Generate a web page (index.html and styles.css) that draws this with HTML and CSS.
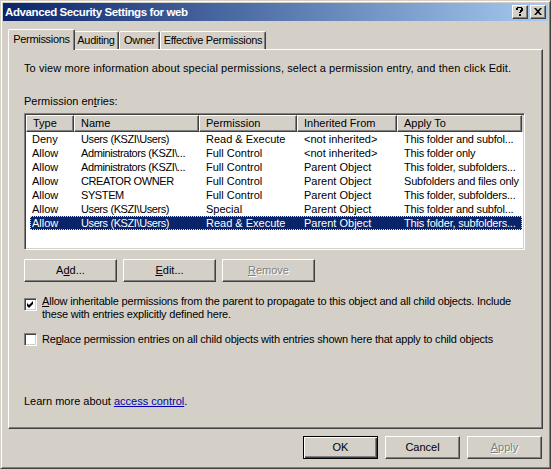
FILE: index.html
```html
<!DOCTYPE html>
<html>
<head>
<meta charset="utf-8">
<title>Advanced Security Settings for web</title>
<link rel="stylesheet" href="styles.css">
</head>
<body>
<div class="window">
  <div class="titlebar">
    <span class="title">Advanced Security Settings for web</span>
    <div class="tbtns">
      <span class="tbtn">
        <svg width="8" height="9" viewBox="0 0 8 9"><path d="M1 0h5v1H1zM0 1h2v2H0zM5 1h2v3H5zM4 3h2v2H4zM3 5h2v1H3zM3 7h2v2H3z" fill="#000"/></svg>
      </span>
      <span class="tbtn">
        <svg width="8" height="7" viewBox="0 0 8 7"><path d="M0 0h2l2 2.2L6 0h2L5 3.5 8 7H6L4 4.8 2 7H0l3-3.5z" fill="#000"/></svg>
      </span>
    </div>
  </div>
  <div class="client">
    <div class="tabs">
      <div class="tab tab-active">Permissions</div>
      <div class="tab tab-auditing">Auditing</div>
      <div class="tab tab-owner">Owner</div>
      <div class="tab tab-effective">Effective Permissions</div>
    </div>
    <div class="panel">
      <p class="intro">To view more information about special permissions, select a permission entry, and then click Edit.</p>
      <div class="label">Permission en<u>t</u>ries:</div>
      <div class="list">
        <div class="header">
          <div class="hcell c1">Type</div>
          <div class="hcell c2">Name</div>
          <div class="hcell c3">Permission</div>
          <div class="hcell c4">Inherited From</div>
          <div class="hcell c5">Apply To</div>
        </div>
        <div class="row">
          <div class="cell c1">Deny</div><div class="cell c2">Users (KSZI\Users)</div><div class="cell c3">Read &amp; Execute</div><div class="cell c4">&lt;not inherited&gt;</div><div class="cell c5">This folder and subfol...</div>
        </div>
        <div class="row">
          <div class="cell c1">Allow</div><div class="cell c2">Administrators (KSZI\...</div><div class="cell c3">Full Control</div><div class="cell c4">&lt;not inherited&gt;</div><div class="cell c5">This folder only</div>
        </div>
        <div class="row">
          <div class="cell c1">Allow</div><div class="cell c2">Administrators (KSZI\...</div><div class="cell c3">Full Control</div><div class="cell c4">Parent Object</div><div class="cell c5">This folder, subfolders...</div>
        </div>
        <div class="row">
          <div class="cell c1">Allow</div><div class="cell c2">CREATOR OWNER</div><div class="cell c3">Full Control</div><div class="cell c4">Parent Object</div><div class="cell c5">Subfolders and files only</div>
        </div>
        <div class="row">
          <div class="cell c1">Allow</div><div class="cell c2">SYSTEM</div><div class="cell c3">Full Control</div><div class="cell c4">Parent Object</div><div class="cell c5">This folder, subfolders...</div>
        </div>
        <div class="row">
          <div class="cell c1">Allow</div><div class="cell c2">Users (KSZI\Users)</div><div class="cell c3">Special</div><div class="cell c4">Parent Object</div><div class="cell c5">This folder and subfol...</div>
        </div>
        <div class="row row-selected">
          <div class="cell c1">Allow</div><div class="cell c2">Users (KSZI\Users)</div><div class="cell c3">Read &amp; Execute</div><div class="cell c4">Parent Object</div><div class="cell c5">This folder, subfolders...</div>
        </div>
      </div>
      <div class="btnrow">
        <button class="btn btn-wide">A<u>d</u>d...</button>
        <button class="btn btn-wide"><u>E</u>dit...</button>
        <button class="btn btn-wide btn-disabled"><u>R</u>emove</button>
      </div>
      <div class="check check-first">
        <span class="box">
          <svg width="9" height="9" viewBox="0 0 9 9"><path d="M1 3l2 2 4-4v3L3 8 1 6z" fill="#000"/></svg>
        </span>
        <span class="ctext"><u>A</u>llow inheritable permissions from the parent to propagate to this object and all child objects. Include<br>these with entries explicitly defined here.</span>
      </div>
      <div class="check check-second">
        <span class="box"></span>
        <span class="ctext">Re<u>p</u>lace permission entries on all child objects with entries shown here that apply to child objects</span>
      </div>
      <div class="spacer"></div>
      <div class="learn">Learn more about <a class="link" href="#">access control</a>.</div>
    </div>
    <div class="footer">
      <button class="btn btn-default">OK</button>
      <button class="btn">Cancel</button>
      <button class="btn btn-disabled"><u>A</u>pply</button>
    </div>
  </div>
</div>
</body>
</html>
```
FILE: styles.css
```css
* { box-sizing: border-box; }
html, body { margin: 0; padding: 0; background: #d4d0c8; }
body {
  font-family: "Liberation Sans", Arial, sans-serif;
  font-size: 11px;
  line-height: 13px;
  color: #000;
}
.window {
  width: 551px;
  height: 469px;
  border: 1px solid;
  border-color: #d4d0c8 #404040 #404040 #d4d0c8;
  box-shadow: inset 1px 1px #fff, inset -1px -1px #808080;
  padding: 2px;
  display: flex;
  flex-direction: column;
  background: #d4d0c8;
}
.titlebar {
  height: 18px;
  flex: none;
  background: linear-gradient(to right, #0a246a, #a6caf0);
  display: flex;
  align-items: center;
  justify-content: space-between;
  padding: 0 2px 0 2px;
}
.title {
  color: #fff;
  font-weight: bold;
  font-size: 11.5px;
  letter-spacing: -0.4px;
  white-space: nowrap;
}
.tbtns { display: flex; gap: 2px; }
.tbtn {
  width: 16px;
  height: 14px;
  background: #d4d0c8;
  border: 1px solid;
  border-color: #fff #404040 #404040 #fff;
  box-shadow: inset -1px -1px #808080;
  display: flex;
  align-items: center;
  justify-content: center;
  padding-bottom: 1px;
}
.client {
  flex: 1;
  display: flex;
  flex-direction: column;
  padding: 8px 5px 0 5px;
}
.tabs {
  display: flex;
  align-items: flex-end;
  height: 20px;
  padding-left: 2px;
  position: relative;
  z-index: 1;
}
.tab {
  height: 18px;
  padding: 0;
  line-height: 16px;
  text-align: center;
  border: 1px solid;
  border-bottom: none;
  border-color: #fff #404040 transparent #fff;
  border-radius: 2px 2px 0 0;
  box-shadow: inset -1px 0 #808080;
  white-space: nowrap;
  background: #d4d0c8;
  letter-spacing: -0.3px;
}
.tab-auditing { width: 46px; }
.tab-owner { width: 41px; }
.tab-effective { width: 106px; }
.tab-active {
  width: 67px;
  height: 21px;
  margin: 0 -2px -1px -2px;
  padding-top: 1px;
  position: relative;
  z-index: 2;
}
.panel {
  height: 380px;
  flex: none;
  border: 1px solid;
  border-color: #fff #404040 #404040 #fff;
  box-shadow: inset -1px -1px #808080;
  padding: 12px 15px 0 15px;
  display: flex;
  flex-direction: column;
}
.intro { margin: 0; white-space: nowrap; letter-spacing: 0.1px; }
.label { margin-top: 20px; }
.list {
  margin-top: 5px;
  width: 501px;
  height: 137px;
  background: #fff;
  border: 1px solid;
  border-color: #808080 #fff #fff #808080;
  box-shadow: inset 1px 1px #404040, inset -1px -1px #d4d0c8;
  padding: 1px;
  overflow: hidden;
}
.header {
  display: flex;
  height: 17px;
  background: #d4d0c8;
}
.hcell {
  height: 17px;
  border: 1px solid;
  border-color: #fff #404040 #404040 #fff;
  box-shadow: inset -1px -1px #808080;
  padding: 1px 0 0 6px;
  white-space: nowrap;
  overflow: hidden;
}
.hcell.c1 { width: 48px; }
.hcell.c2 { width: 125px; }
.hcell.c3 { width: 98px; }
.hcell.c4 { width: 100px; }
.hcell.c5 { width: 125px; }
.row {
  display: flex;
  height: 14px;
  line-height: 14px;
  margin-left: 4px;
  width: 492px;
}
.cell {
  white-space: nowrap;
  overflow: visible;
  padding-left: 7px;
  flex: none;
}
.row .c1 { width: 44px; padding-left: 2px; }
.row .c2 { width: 125px; letter-spacing: -0.4px; }
.row .c3 { width: 98px; }
.row .c4 { width: 100px; }
.row .c5 { width: 125px; padding-left: 7px; letter-spacing: -0.2px; }
.row-selected {
  background: #0a246a;
  color: #fff;
  outline: 1px dotted #f5db95;
  outline-offset: -1px;
}
.btnrow {
  display: flex;
  gap: 6px;
  margin-top: 9px;
}
.btn {
  font-family: inherit;
  font-size: 11px;
  line-height: 13px;
  color: #000;
  width: 75px;
  height: 23px;
  padding: 0;
  background: #d4d0c8;
  border: 1px solid;
  border-color: #fff #404040 #404040 #fff;
  box-shadow: inset -1px -1px #808080;
  text-align: center;
}
.btn-wide { width: 93px; }
.btn-disabled {
  color: #808080;
  text-shadow: 1px 1px #fff;
}
.btn-default {
  border: 1px solid #000;
  box-shadow: inset 1px 1px #fff, inset -1px -1px #404040, inset -2px -2px #808080;
}
.check {
  display: flex;
  align-items: flex-start;
  gap: 5px;
}
.check-first { margin-top: 13px; }
.check-second { margin-top: 12px; }
.check-first .box { margin-top: 3px; }
.box {
  flex: none;
  width: 13px;
  height: 13px;
  background: #fff;
  border: 1px solid;
  border-color: #808080 #fff #fff #808080;
  box-shadow: inset 1px 1px #404040, inset -1px -1px #d4d0c8;
  display: flex;
  align-items: center;
  justify-content: center;
}
.ctext { white-space: nowrap; letter-spacing: -0.2px; }
.spacer { flex: 1; }
.learn { margin-bottom: 20px; }
.link { color: #0000b0; text-decoration: underline; }
.footer {
  display: flex;
  justify-content: flex-end;
  gap: 7px;
  padding-top: 7px;
  padding-right: 1px;
}
```
